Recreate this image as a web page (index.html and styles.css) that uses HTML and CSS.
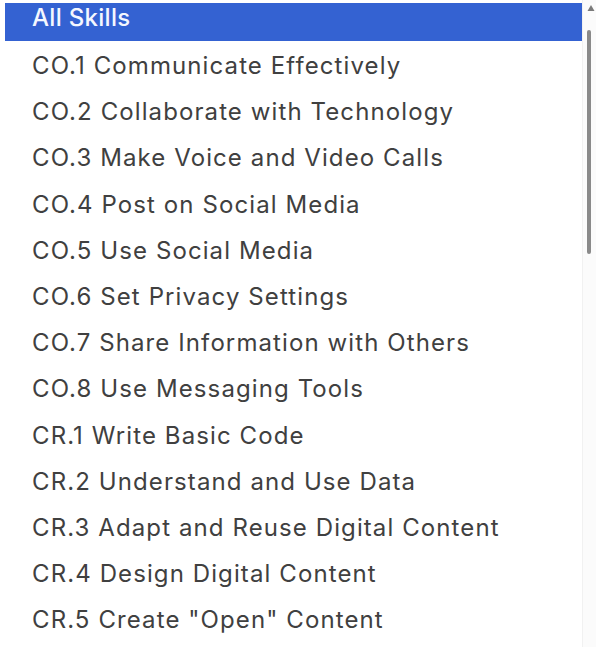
FILE: index.html
```
<!DOCTYPE html>
<html lang="en">
<head>
<meta charset="utf-8">
<title>Skills</title>
<link rel="stylesheet" href="styles.css">
</head>
<body>
<div class="page">
  <ul class="list">
    <li class="item selected">All Skills</li>
    <li class="item">CO.1 Communicate Effectively</li>
    <li class="item">CO.2 Collaborate with Technology</li>
    <li class="item">CO.3 Make Voice and Video Calls</li>
    <li class="item">CO.4 Post on Social Media</li>
    <li class="item">CO.5 Use Social Media</li>
    <li class="item">CO.6 Set Privacy Settings</li>
    <li class="item">CO.7 Share Information with Others</li>
    <li class="item">CO.8 Use Messaging Tools</li>
    <li class="item">CR.1 Write Basic Code</li>
    <li class="item">CR.2 Understand and Use Data</li>
    <li class="item">CR.3 Adapt and Reuse Digital Content</li>
    <li class="item">CR.4 Design Digital Content</li>
    <li class="item">CR.5 Create "Open" Content</li>
  </ul>
  <div class="gutter">
    <svg class="arrow" width="8" height="8" viewBox="0 0 8 8"><polygon points="4,1 7.5,7 0.5,7" fill="#7a7a7a"/></svg>
    <div class="thumb"></div>
  </div>
</div>
</body>
</html>
```
FILE: styles.css
```
html, body {
  margin: 0;
  padding: 0;
  background: #ffffff;
}
.page {
  display: flex;
  width: 596px;
  height: 647px;
  overflow: hidden;
}
.list {
  list-style: none;
  margin: 0 0 0 5px;
  padding: 3px 0 0 0;
  width: 577px;
  flex: none;
  font-family: Inter, "Liberation Sans", sans-serif;
  font-size: 24px;
  color: #404040;
}
.item {
  padding-left: 27px;
  line-height: 46.2px;
  letter-spacing: 1.1px;
  white-space: nowrap;
}
.item.selected {
  background: #3462d2;
  color: #f4f7ff;
  font-weight: 500;
  letter-spacing: 0.3px;
  line-height: 30px;
  height: 30px;
  padding-bottom: 8px;
  margin-bottom: 2px;
}
.gutter {
  flex: 1;
  display: flex;
  flex-direction: column;
  align-items: flex-start;
  background: #fbfbfb;
  border-left: 1px solid #f1f1f1;
}
.arrow {
  margin: 4px 0 0 4px;
}
.thumb {
  margin: 18px 0 0 4px;
  width: 4px;
  height: 224px;
  border-radius: 2px;
  background: #8a8a8a;
}
```
